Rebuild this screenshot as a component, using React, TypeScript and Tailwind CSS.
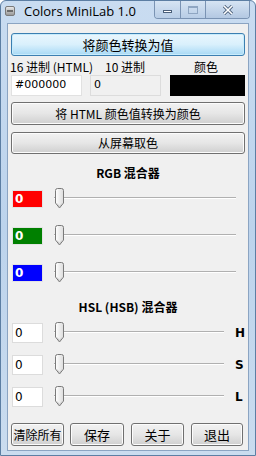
import React from "react";

const cn = '"Noto Sans CJK SC", "Liberation Sans", sans-serif';
const latin = '"DejaVu Sans", "Noto Sans CJK SC", sans-serif';

function Btn({ label, wide, focus, className = "" }: any) {
  return (
    <div
      className={
        "flex items-center justify-center whitespace-nowrap rounded-[3px] border leading-none text-black " +
        (focus
          ? "border-[#3c7fb1] bg-gradient-to-b from-[#eaf6fd] via-[#d9f0fc] to-[#a7d9f5] shadow-[inset_0_0_0_1px_#c8ecfc] "
          : "border-[#707070] bg-gradient-to-b from-[#f2f2f2] via-[#e6e6e6] to-[#cfcfcf] shadow-[inset_0_0_0_1px_#fcfcfc] ") +
        (wide ? "w-full " : "") +
        className
      }
      style={{ fontFamily: cn }}
    >
      {label}
    </div>
  );
}

function Thumb() {
  return (
    <svg width="11" height="21" viewBox="0 0 11 21" className="shrink-0">
      <defs>
        <linearGradient id="tg" x1="0" y1="0" x2="1" y2="0">
          <stop offset="0" stopColor="#ffffff" />
          <stop offset="1" stopColor="#dcdcdc" />
        </linearGradient>
      </defs>
      <path d="M1.5 2.5 Q1.5 0.5 3.5 0.5 H7.5 Q9.5 0.5 9.5 2.5 V15 L5.5 20 L1.5 15 Z" fill="url(#tg)" stroke="#7a7a7a" />
      <path d="M3 15.5 L5.5 18.5 L8 15.5" fill="none" stroke="#c8c8c8" />
    </svg>
  );
}

function Slider({ width }: { width: number }) {
  return (
    <div className="relative flex h-[21px] items-center" style={{ width }}>
      <div className="absolute left-0 right-0 top-[9px] h-[2px] border-t border-[#b0b0b0] bg-white" />
      <div className="relative">
        <Thumb />
      </div>
    </div>
  );
}

function RgbRow({ color }: { color: string }) {
  return (
    <div className="flex h-[21px] items-center">
      <div className={"ml-[4px] flex h-[18px] w-[31px] items-center border border-[#e3e3e3] pl-[2px] text-[12px] font-bold text-white " + color} style={{ fontFamily: latin }}>
        0
      </div>
      <div className="ml-[11px]">
        <Slider width={182} />
      </div>
    </div>
  );
}

function HslRow({ letter }: { letter: string }) {
  return (
    <div className="flex h-[21px] items-center">
      <div className="ml-[4px] flex h-[20px] w-[31px] items-center border border-[#dcdcdc] bg-white pl-[2px] text-[12px] text-black" style={{ fontFamily: latin }}>
        0
      </div>
      <div className="ml-[11px]">
        <Slider width={170} />
      </div>
      <div className="ml-[11px] text-[12px] font-bold text-black" style={{ fontFamily: latin }}>
        {letter}
      </div>
    </div>
  );
}

export default function App() {
  return (
    <div className="flex h-[456px] w-[256px] flex-col overflow-hidden rounded-t-[6px] border border-[#5c7ea3] bg-gradient-to-b from-[#c9dcf1] via-[#bcd3ec] to-[#cadcef]">
      {/* title bar */}
      <div className="flex h-[22px] shrink-0 items-start">
        <div className="ml-[4px] mt-[5px] h-[10px] w-[10px] rounded-[2px] border border-[#7a7a7a] bg-gradient-to-b from-[#e8e8e8] to-[#9a9a9a]">
          <div className="mx-[1px] mt-[3px] h-[2px] bg-[#6b6b6b]" />
        </div>
        <div className="ml-[9px] mt-[3px] text-[13px] leading-[15px] text-black" style={{ fontFamily: '"Open Sans", "DejaVu Sans", sans-serif' }}>
          Colors MiniLab 1.0
        </div>
        <div className="ml-auto mr-[5px] flex h-[18px] overflow-hidden rounded-b-[4px] border border-t-0 border-[#7a93b3]">
          <div className="flex w-[26px] items-center justify-center border-r border-[#7a93b3] bg-gradient-to-b from-[#d6e4f3] to-[#b8cde6]">
            <div className="mt-[4px] h-[3px] w-[9px] border border-[#4a5f7a] bg-white" />
          </div>
          <div className="flex w-[25px] items-center justify-center border-r border-[#7a93b3] bg-gradient-to-b from-[#d6e4f3] to-[#b8cde6]">
            <div className="h-[8px] w-[10px] border border-[#8fa6c2] border-t-2" />
          </div>
          <div className="flex w-[43px] items-center justify-center bg-gradient-to-b from-[#d6e4f3] to-[#b3c8e2]">
            <svg width="12" height="10" viewBox="0 0 12 10">
              <path d="M2 1 L10 9 M10 1 L2 9" stroke="#4a5f7a" strokeWidth="3.2" />
              <path d="M2 1 L10 9 M10 1 L2 9" stroke="#ffffff" strokeWidth="1.6" />
            </svg>
          </div>
        </div>
      </div>

      {/* client area */}
      <div className="mx-[6px] h-[428px] shrink-0 border border-[#8ba4c2] bg-[#f0f0f0]">
        <div className="px-[3px] pt-[9px]">
          <Btn label="将颜色转换为值" wide focus className="h-[23px] text-[13px]" />
        </div>

        <div className="mt-[4px] flex h-[13px] items-center text-[12px] leading-none text-black">
          <div className="ml-[2px] w-[95px]" style={{ fontFamily: cn }}>16 进制 (HTML)</div>
          <div className="w-[80px]" style={{ fontFamily: cn }}>10 进制</div>
          <div className="ml-[9px]" style={{ fontFamily: cn }}>颜色</div>
        </div>

        <div className="mt-[2px] flex h-[21px] items-stretch">
          <div className="ml-[3px] flex w-[71px] items-center border border-[#e1e1e1] bg-white pl-[3px] text-[11px] text-black" style={{ fontFamily: latin }}>
            #000000
          </div>
          <div className="ml-[8px] flex w-[71px] items-center border border-[#dcdcdc] bg-[#f0f0f0] pl-[3px] text-[11px] text-black" style={{ fontFamily: latin }}>
            0
          </div>
          <div className="ml-[9px] w-[75px] bg-black" />
        </div>

        <div className="mt-[6px] px-[3px]">
          <Btn label="将 HTML 颜色值转换为颜色" wide className="h-[23px] text-[12px]" />
        </div>
        <div className="mt-[7px] px-[3px]">
          <Btn label="从屏幕取色" wide className="h-[22px] text-[12px]" />
        </div>

        <div className="mt-[12px] text-center text-[12px] font-bold leading-[14px] text-black" style={{ fontFamily: cn }}>
          RGB 混合器
        </div>

        <div className="mt-[8px] flex flex-col gap-[16px]">
          <RgbRow color="bg-[#ff0000]" />
          <RgbRow color="bg-[#008000]" />
          <RgbRow color="bg-[#0000ff]" />
        </div>

        <div className="mt-[17px] text-center text-[12px] font-bold leading-[14px] text-black" style={{ fontFamily: cn }}>
          HSL (HSB) 混合器
        </div>

        <div className="mt-[8px] flex flex-col gap-[11px]">
          <HslRow letter="H" />
          <HslRow letter="S" />
          <HslRow letter="L" />
        </div>

        <div className="mt-[16px] flex px-[3px]">
          <Btn label="清除所有" className="h-[23px] w-[53px] text-[12px]" />
          <Btn label="保存" className="ml-[6px] h-[23px] w-[54px] text-[13px]" />
          <Btn label="关于" className="ml-[7px] h-[23px] w-[53px] text-[13px]" />
          <Btn label="退出" className="ml-[7px] h-[23px] w-[52px] text-[13px]" />
        </div>
      </div>
    </div>
  );
}
